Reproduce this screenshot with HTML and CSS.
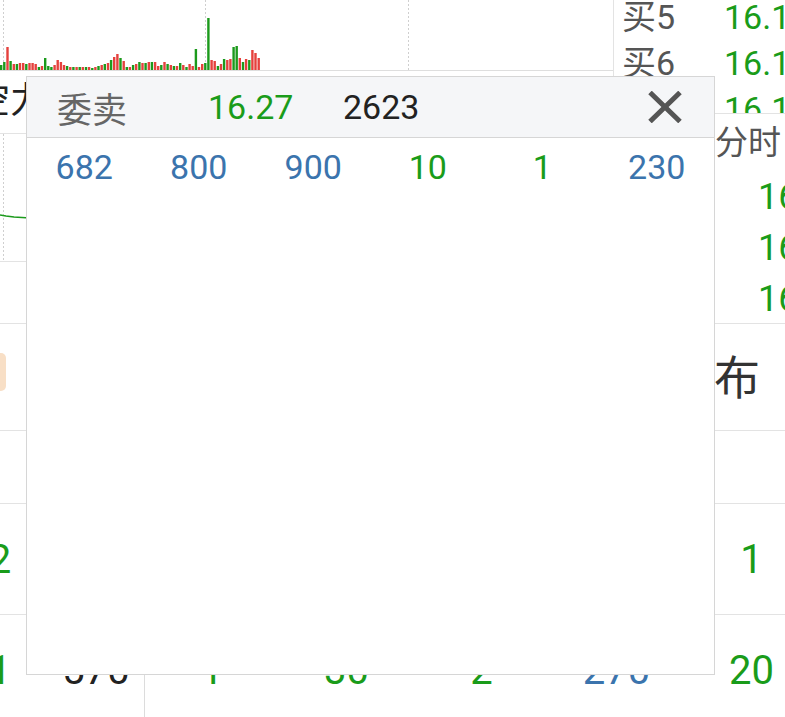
FILE: index.html
```html
<!DOCTYPE html>
<html lang="zh-CN">
<head>
    <meta charset="UTF-8">
    <meta name="viewport" content="width=device-width, initial-scale=1.0">
    <title>委卖明细</title>
    <link rel="stylesheet" href="styles.css">
</head>
<body>
    <div class="screen">
        <section class="top">
            <div class="charts">
                <div class="volume">
                    <svg width="613" height="70" viewBox="0 0 613 70">
                        <line class="grid" x1="3.5" y1="0" x2="3.5" y2="70"/>
                        <line class="grid" x1="205.5" y1="0" x2="205.5" y2="70"/>
                        <line class="grid" x1="408.5" y1="0" x2="408.5" y2="70"/>
                        <path class="bar-up" d="M6.3 70v-23h2.4v23zM12.6 70v-6h2.4v6zM18.8 70v-7h2.4v7zM22 70v-7h2.4v7zM28.3 70v-7h2.4v7zM31.4 70v-7h2.4v7zM34.5 70v-6h2.4v6zM40.8 70v-4h2.4v4zM53.4 70v-5h2.4v5zM56.5 70v-10h2.4v10zM59.7 70v-8h2.4v8zM62.8 70v-5h2.4v5zM69.1 70v-3h2.4v3zM75.4 70v-3h2.4v3zM81.6 70v-3h2.4v3zM87.9 70v-3h2.4v3zM94.2 70v-3h2.4v3zM100.5 70v-5h2.4v5zM106.8 70v-7h2.4v7zM113 70v-13h2.4v13zM116.2 70v-16h2.4v16zM122.5 70v-9h2.4v9zM128.7 70v-3h2.4v3zM135 70v-6h2.4v6zM141.3 70v-7h2.4v7zM147.6 70v-8h2.4v8zM153.9 70v-8h2.4v8zM157 70v-4h2.4v4zM163.3 70v-8h2.4v8zM169.6 70v-5h2.4v5zM175.8 70v-4h2.4v4zM182.1 70v-5h2.4v5zM188.4 70v-6h2.4v6zM191.5 70v-4h2.4v4zM197.8 70v-3h2.4v3zM201 70v-6h2.4v6zM210.4 70v-10h2.4v10zM213.5 70v-9h2.4v9zM219.8 70v-6h2.4v6zM226.1 70v-10h2.4v10zM229.2 70v-11h2.4v11zM238.6 70v-12h2.4v12zM244.9 70v-11h2.4v11zM251.2 70v-20h2.4v20zM254.3 70v-17h2.4v17zM257.5 70v-12h2.4v12z"/>
                        <path class="bar-down" d="M0 70v-5h2.4v5zM3.1 70v-8h2.4v8zM9.4 70v-9h2.4v9zM15.7 70v-6h2.4v6zM25.1 70v-6h2.4v6zM37.7 70v-3h2.4v3zM44 70v-12h2.4v12zM47.1 70v-4h2.4v4zM50.2 70v-3h2.4v3zM65.9 70v-4h2.4v4zM72.2 70v-3h2.4v3zM78.5 70v-3h2.4v3zM84.8 70v-3h2.4v3zM91.1 70v-2h2.4v2zM97.3 70v-4h2.4v4zM103.6 70v-6h2.4v6zM109.9 70v-10h2.4v10zM119.3 70v-12h2.4v12zM125.6 70v-3h2.4v3zM131.9 70v-5h2.4v5zM138.2 70v-8h2.4v8zM144.4 70v-7h2.4v7zM150.7 70v-8h2.4v8zM160.1 70v-5h2.4v5zM166.4 70v-6h2.4v6zM172.7 70v-4h2.4v4zM179 70v-7h2.4v7zM185.3 70v-3h2.4v3zM194.7 70v-21h2.4v21zM204.1 70v-7h2.4v7zM207.2 70v-52h2.4v52zM216.7 70v-4h2.4v4zM222.9 70v-11h2.4v11zM232.4 70v-23h2.4v23zM235.5 70v-24h2.4v24zM241.8 70v-8h2.4v8zM248.1 70v-10h2.4v10z"/>
                    </svg>
                </div>
                <div class="power-title">多空力量</div>
                <div class="trend">
                    <svg width="613" height="127" viewBox="0 0 613 127">
                        <line class="grid" x1="3.5" y1="0" x2="3.5" y2="127"/>
                        <polyline class="trend-line" points="0,81 6,82 14,83 22,83.5 30,84 60,85 120,86"/>
                    </svg>
                </div>
            </div>
            <aside class="side">
                <div class="book">
                    <div class="book-row"><span class="book-label">买5</span><span class="down">16.14</span></div>
                    <div class="book-row"><span class="book-label">买6</span><span class="down">16.13</span></div>
                    <div class="book-row"><span class="book-label">买7</span><span class="down">16.12</span></div>
                </div>
                <div class="minute">
                    <div class="minute-head">分时</div>
                    <div class="minute-row down">16.17</div>
                    <div class="minute-row down">16.16</div>
                    <div class="minute-row down">16.16</div>
                </div>
            </aside>
        </section>

        <section class="dist-title">
            <span class="marker"></span>
            <span class="dist-text">成交分布</span>
        </section>

        <div class="table-row blank"></div>

        <div class="table-row">
            <span class="cell down">2</span>
            <span class="cell dark">310</span>
            <span class="cell down">2</span>
            <span class="cell down">10</span>
            <span class="cell down">1</span>
            <span class="cell blue">120</span>
            <span class="cell down">1</span>
        </div>

        <div class="table-row">
            <span class="cell down">1</span>
            <span class="cell dark">570</span>
            <span class="cell down split">1</span>
            <span class="cell down">30</span>
            <span class="cell down">2</span>
            <span class="cell blue">270</span>
            <span class="cell down">20</span>
        </div>

        <div class="popup">
            <div class="popup-head">
                <span class="popup-label">委卖</span>
                <span class="popup-price down">16.27</span>
                <span class="popup-volume">2623</span>
                <button class="popup-close" aria-label="关闭">
                    <svg width="34" height="32" viewBox="0 0 34 32">
                        <path d="M2 1.5L32 30.5M32 1.5L2 30.5"/>
                    </svg>
                </button>
            </div>
            <div class="popup-row">
                <span class="blue">682</span>
                <span class="blue">800</span>
                <span class="blue">900</span>
                <span class="down">10</span>
                <span class="down">1</span>
                <span class="blue">230</span>
            </div>
        </div>
    </div>
</body>
</html>
```

FILE: styles.css
```css
body {
    margin: 0;
    background: #fff;
    font-family: Roboto, "Noto Sans CJK SC", sans-serif;
    color: #222;
    overflow: hidden;
}

.screen {
    position: relative;
    width: 785px;
    height: 717px;
    overflow: hidden;
}

.down {
    color: #1a9c1a;
}

.blue {
    color: #3b74ad;
}

.dark {
    color: #222;
}

/* top area: charts on the left, order book on the right */

.top {
    display: flex;
    height: 323px;
    border-bottom: 1px solid #e3e3e3;
}

.charts {
    width: 613px;
    flex: none;
}

.volume {
    height: 70px;
    border-bottom: 1px solid #dedede;
}

.volume svg,
.trend svg {
    display: block;
}

.grid {
    stroke: #cfcfcf;
    stroke-width: 1;
    stroke-dasharray: 2 2;
}

.bar-up {
    fill: #e5413d;
}

.bar-down {
    fill: #1c9a1c;
}

.power-title {
    height: 62px;
    line-height: 60px;
    margin-left: -62px;
    font-size: 36px;
    color: #222;
    border-bottom: 1px solid #e3e3e3;
    white-space: nowrap;
}

.trend {
    height: 127px;
    border-bottom: 1px solid #e3e3e3;
}

.trend-line {
    fill: none;
    stroke: #1c9a1c;
    stroke-width: 1.5;
}

.side {
    flex: 1;
    border-left: 1px solid #e3e3e3;
    display: flex;
    flex-direction: column;
}

.book {
    height: 113px;
    overflow: hidden;
    flex: none;
}

.book-row {
    display: flex;
    height: 46px;
    line-height: 46px;
    font-size: 34px;
    padding-left: 8px;
    white-space: nowrap;
}

.book-row:first-child {
    margin-top: -6px;
}

.book-label {
    width: 102px;
    color: #555;
}

.minute {
    flex: 1;
    overflow: hidden;
    border-top: 1px solid #e3e3e3;
    margin-left: -1px;
    background: #fff;
}

.minute-head {
    height: 58px;
    line-height: 58px;
    padding-left: 102px;
    font-size: 33px;
    color: #555;
}

.minute-row {
    height: 51px;
    line-height: 51px;
    padding-left: 145px;
    font-size: 36px;
    white-space: nowrap;
}

/* distribution table */

.dist-title {
    display: flex;
    align-items: center;
    justify-content: space-between;
    height: 100px;
    padding-bottom: 6px;
    padding-right: 25px;
    border-bottom: 1px solid #e3e3e3;
}

.marker {
    width: 6px;
    height: 38px;
    margin-top: -4px;
    border-radius: 0 5px 5px 0;
    background: #f8dfc6;
}

.dist-text {
    font-size: 46px;
    color: #333;
}

.table-row {
    display: grid;
    grid-template-columns: 96px 96px 135px 135px 135px 135px 135px;
    margin-left: -48px;
    height: 110px;
    border-bottom: 1px solid #e3e3e3;
}

.table-row.blank {
    height: 72px;
}

.cell {
    display: flex;
    align-items: center;
    justify-content: center;
    font-size: 40px;
}

.cell.split {
    border-left: 1px solid #dcdcdc;
}

/* popup over the page */

.popup {
    position: absolute;
    left: 26px;
    top: 76px;
    width: 687px;
    height: 597px;
    border: 1px solid #d6d6d6;
    background: #fff;
}

.popup-head {
    display: flex;
    align-items: center;
    height: 60px;
    padding-left: 30px;
    padding-right: 32px;
    background: #f5f6f8;
    border-bottom: 1px solid #d6d6d6;
}

.popup-label {
    width: 151px;
    font-size: 35px;
    color: #666;
}

.popup-price {
    width: 135px;
    font-size: 34px;
}

.popup-volume {
    font-size: 34px;
    color: #222;
}

.popup-close {
    margin-left: auto;
    padding: 0;
    border: 0;
    background: none;
    display: flex;
}

.popup-close path {
    fill: none;
    stroke: #555;
    stroke-width: 5;
}

.popup-row {
    display: grid;
    grid-template-columns: repeat(6, 1fr);
    height: 58px;
    align-items: center;
    text-align: center;
    font-size: 34px;
}
```
